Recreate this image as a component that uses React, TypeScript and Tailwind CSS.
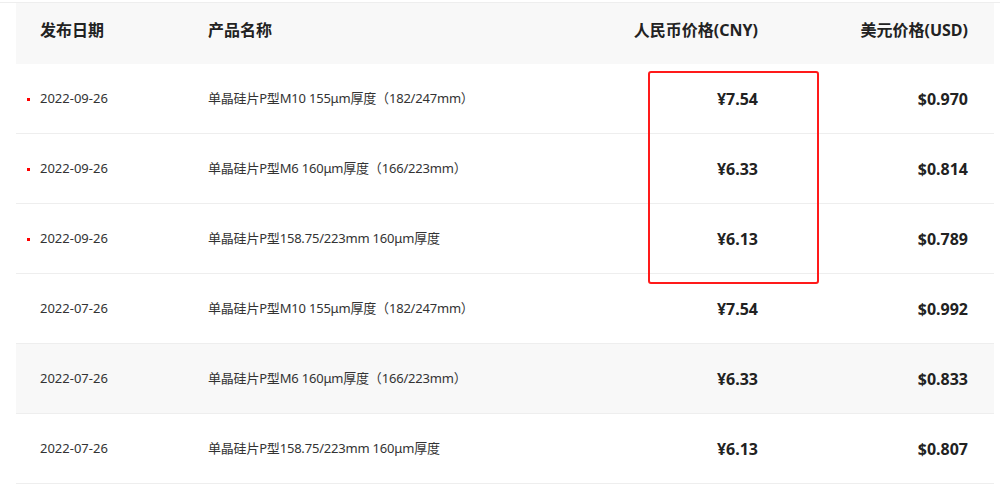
import React from "react";

type Row = { date: string; name: string; cny: string; usd: string; dot: boolean; gray?: boolean };

const rows: Row[] = [
  { date: "2022-09-26", name: "单晶硅片P型M10 155μm厚度（182/247mm）", cny: "¥7.54", usd: "$0.970", dot: true },
  { date: "2022-09-26", name: "单晶硅片P型M6 160μm厚度（166/223mm）", cny: "¥6.33", usd: "$0.814", dot: true },
  { date: "2022-09-26", name: "单晶硅片P型158.75/223mm 160μm厚度", cny: "¥6.13", usd: "$0.789", dot: true },
  { date: "2022-07-26", name: "单晶硅片P型M10 155μm厚度（182/247mm）", cny: "¥7.54", usd: "$0.992", dot: false },
  { date: "2022-07-26", name: "单晶硅片P型M6 160μm厚度（166/223mm）", cny: "¥6.33", usd: "$0.833", dot: false, gray: true },
  { date: "2022-07-26", name: "单晶硅片P型158.75/223mm 160μm厚度", cny: "¥6.13", usd: "$0.807", dot: false },
];

export default function App() {
  return (
    <div
      className="relative w-[1000px] h-[493px] bg-white overflow-hidden text-[#333]"
      style={{ fontFamily: '"Noto Sans", "Noto Sans CJK SC", sans-serif' }}
    >
      <div className="mt-[2px] border-t border-[#eeeeee]">
        <div className="mx-[16px] w-[978px]">
          <div className="flex h-[61px] items-start pt-[16px] bg-[#f8f8f8] text-[16px] leading-[22px] font-bold text-[#222]">
            <div className="w-[168px] pl-[24px]">发布日期</div>
            <div className="flex-1 pl-[24px]">产品名称</div>
            <div className="w-[200px] pr-[26px] text-right">人民币价格(CNY)</div>
            <div className="w-[210px] pr-[26px] text-right">美元价格(USD)</div>
          </div>
          {rows.map((r, i) => (
            <div
              key={i}
              className={`flex h-[70px] items-center border-b border-[#eeeeee] pt-[1px] ${r.gray ? "bg-[#f8f8f8]" : "bg-white"}`}
            >
              <div className="w-[168px] pl-[11px] flex items-center text-[13px]">
                <span className={`block shrink-0 w-[3px] h-[3px] ${r.dot ? "bg-[#ff0000]" : "bg-transparent"}`} />
                <span className="ml-[10px]">{r.date}</span>
              </div>
              <div className="flex-1 pl-[24px] text-[13px] tracking-[-0.2px]">{r.name}</div>
              <div className="w-[200px] pr-[26px] text-right text-[16px] font-bold text-[#222]">{r.cny}</div>
              <div className="w-[210px] pr-[26px] text-right text-[16px] font-bold text-[#222]">{r.usd}</div>
            </div>
          ))}
        </div>
      </div>
      <div className="absolute left-[648px] top-[71px] w-[171px] h-[213px] border-2 border-[#ff1a1a] rounded-[3px]" />
    </div>
  );
}
